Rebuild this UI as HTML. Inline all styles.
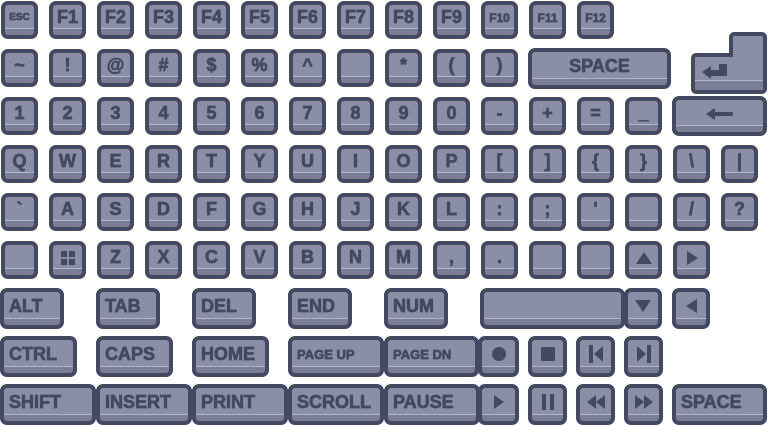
<!DOCTYPE html>
<html><head><meta charset="utf-8"><style>
body{margin:0;width:768px;height:425px;background:#fff;position:relative;overflow:hidden;font-family:"Liberation Sans",sans-serif}
.k{position:absolute;box-sizing:border-box;border:4px solid #434960;border-radius:7px;background:linear-gradient(#8a8ea6 0,#8a8ea6 calc(100% - 7px),#b3b6c6 calc(100% - 7px),#b3b6c6 calc(100% - 6px),#7a7e96 calc(100% - 6px));color:#434960;font-weight:bold;font-size:18px;-webkit-text-stroke:0.7px #434960;display:flex;align-items:center;justify-content:center;padding-bottom:5px;white-space:nowrap}
.w{justify-content:flex-start;padding-left:5px}
svg{display:block}
</style></head><body>
<svg style="position:absolute;left:689px;top:31px" width="79" height="64">
<path d="M45 3 H73 a3 3 0 0 1 3 3 V58 a3 3 0 0 1 -3 3 H7 a3 3 0 0 1 -3 -3 V27 a3 3 0 0 1 3 -3 H42 V6 a3 3 0 0 1 3 -3Z" fill="#8a8ea6" stroke="#434960" stroke-width="4"/>
<rect x="6" y="50" width="68" height="9" fill="#7a7e96"/><rect x="6" y="49" width="68" height="1" fill="#b3b6c6"/>
<path d="M13 41 L22 35 V39 H30 V33 H38 V45 H22 V48Z" fill="#434960"/>
</svg>
<script>
const T='#434960';
function key(x,y,w,h,c,wide){const d=document.createElement('div');d.className='k'+(wide?' w':'');d.style.cssText=`left:${x}px;top:${y}px;width:${w}px;height:${h}px`;d.innerHTML=c;document.body.appendChild(d);}
const rows=[
['<span style="font-size:10px">ESC</span>','F1','F2','F3','F4','F5','F6','F7','F8','F9','<span style="font-size:12px">F10</span>','<span style="font-size:12px">F11</span>','<span style="font-size:12px">F12</span>'],
['~','!','@','#','$','%','^','','*','(',')'],
['1','2','3','4','5','6','7','8','9','0','-','+','=','_'],
['Q','W','E','R','T','Y','U','I','O','P','[',']','{','}','\\','|'],
['`','A','S','D','F','G','H','J','K','L',':',';',"'",'','/','?'],
['','<svg width="14" height="14"><rect width="6" height="6" fill="'+T+'"/><rect x="8" width="6" height="6" fill="'+T+'"/><rect y="8" width="6" height="6" fill="'+T+'"/><rect x="8" y="8" width="6" height="6" fill="'+T+'"/></svg>','Z','X','C','V','B','N','M',',','.','','','<svg width="18" height="14"><path d="M9 1 L17 13 H1Z" fill="'+T+'"/></svg>','<svg width="14" height="16"><path d="M2 1 L13 8 L2 15Z" fill="'+T+'"/></svg>']];
rows.forEach((r,ri)=>r.forEach((c,ci)=>key(1+ci*48,1+ri*48,37,38,c)));
key(528,48,143,41,'SPACE');
key(672,96,95,40,'<svg width="30" height="14"><path d="M1 7 L10 1 V5 H28 V9 H10 V13Z" fill="'+T+'"/></svg>');
[['ALT',0,64],['TAB',96,64],['DEL',192,64],['END',288,64],['NUM',384,64]].forEach(a=>key(a[1],288,a[2],41,a[0],1));
key(480,288,145,41,'');
key(624,288,38,41,'<svg width="18" height="14"><path d="M1 1 H17 L9 13Z" fill="'+T+'"/></svg>');
key(672,288,38,41,'<svg width="14" height="16"><path d="M13 1 L2 8 L13 15Z" fill="'+T+'"/></svg>');
[['CTRL',0,77],['CAPS',96,77],['HOME',192,77]].forEach(a=>key(a[1],336,a[2],41,a[0],1));
key(288,336,96,41,'<span style="font-size:13px">PAGE UP</span>',1);
key(384,336,95,41,'<span style="font-size:13px">PAGE DN</span>',1);
key(478,336,41,41,'<svg width="16" height="16"><circle cx="8" cy="8" r="7" fill="'+T+'"/></svg>');
key(528,336,39,41,'<svg width="14" height="14"><rect width="14" height="14" fill="'+T+'"/></svg>');
key(576,336,39,41,'<svg width="16" height="18"><rect x="1" width="4" height="18" fill="'+T+'"/><path d="M15 1 L6 9 L15 17Z" fill="'+T+'"/></svg>');
key(624,336,39,41,'<svg width="16" height="18"><rect x="11" width="4" height="18" fill="'+T+'"/><path d="M1 1 L10 9 L1 17Z" fill="'+T+'"/></svg>');
[['SHIFT',0,96],['INSERT',96,96],['PRINT',192,96],['SCROLL',288,96],['PAUSE',384,96]].forEach(a=>key(a[1],384,a[2],41,a[0],1));
key(478,384,41,41,'<svg width="12" height="16"><path d="M1 1 L11 8 L1 15Z" fill="'+T+'"/></svg>');
key(528,384,39,41,'<svg width="14" height="16"><rect x="1" width="4" height="16" fill="'+T+'"/><rect x="9" width="4" height="16" fill="'+T+'"/></svg>');
key(576,384,39,41,'<svg width="20" height="16"><path d="M10 1 L1 8 L10 15Z M19 1 L10 8 L19 15Z" fill="'+T+'"/></svg>');
key(624,384,39,41,'<svg width="20" height="16"><path d="M1 1 L10 8 L1 15Z M10 1 L19 8 L10 15Z" fill="'+T+'"/></svg>');
key(672,384,95,41,'SPACE',1);
</script>
</body></html>
